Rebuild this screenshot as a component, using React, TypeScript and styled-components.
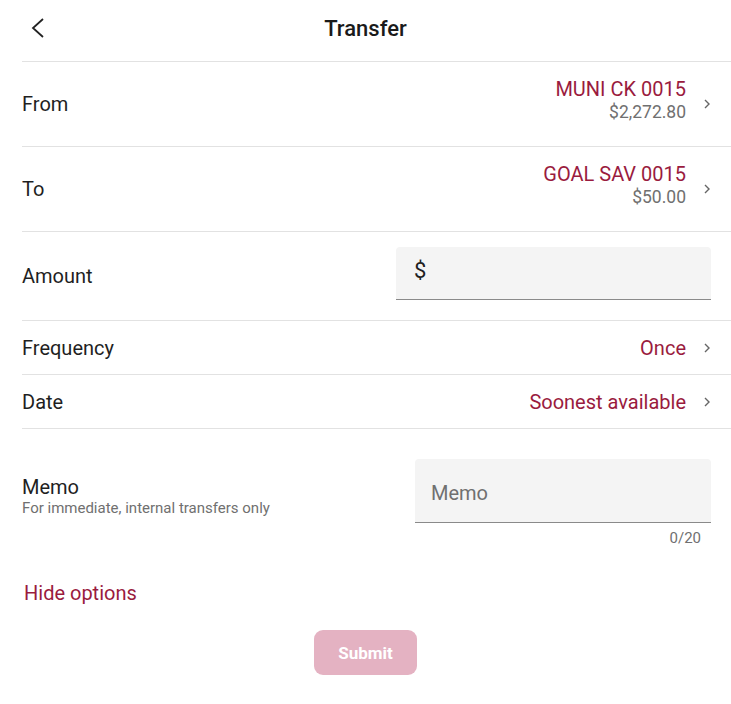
import React from "react";
import styled, { createGlobalStyle } from "styled-components";

const Global = createGlobalStyle`
  html, body { margin: 0; padding: 0; background: #fff; }
  body { font-family: Roboto, "Noto Sans", Arial, sans-serif; color: #1f1f1f; }
  * { box-sizing: border-box; }
`;

const CRIMSON = "#9a1b3e";
const GRAY = "#707070";

const Page = styled.div`
  width: 731px;
  display: flex;
  flex-direction: column;
`;

const Header = styled.header`
  height: 62px;
  margin-left: 22px;
  display: grid;
  grid-template-columns: 1fr auto 1fr;
  align-items: center;
  border-bottom: 1px solid #e2e2e2;
  padding-right: 22px;
`;

const BackBtn = styled.button`
  justify-self: start;
  background: none;
  border: 0;
  padding: 0;
  margin-left: 8px;
  margin-top: -6px;
  width: 20px;
  height: 24px;
  display: flex;
  align-items: center;
  cursor: pointer;
`;

const Title = styled.h1`
  margin: -4px 0 0;
  font-size: 22px;
  font-weight: 500;
  color: #1a1a1a;
`;

const Row = styled.div<{ $h: number }>`
  margin-left: 22px;
  height: ${(p) => p.$h}px;
  display: flex;
  align-items: center;
  justify-content: space-between;
  border-bottom: 1px solid #e2e2e2;
  padding-right: 20px;
`;

const Label = styled.div`
  font-size: 20px;
  color: #1f1f1f;
`;

const ValueWrap = styled.div`
  display: flex;
  align-items: center;
  gap: 17px;
`;

const ValueCol = styled.div`
  display: flex;
  flex-direction: column;
  align-items: flex-end;
  line-height: 23px;
  margin-top: -6px;
`;

const Primary = styled.span`
  font-size: 20px;
  color: ${CRIMSON};
`;

const Secondary = styled.span`
  font-size: 17.5px;
  color: ${GRAY};
`;

const Field = styled.div<{ $w: number; $h: number; $lift?: number }>`
  width: ${(p) => p.$w}px;
  height: ${(p) => p.$h}px;
  margin-bottom: ${(p) => (p.$lift ?? 0) * 2}px;
  background: #f4f4f4;
  border-radius: 4px 4px 0 0;
  border-bottom: 1px solid #8a8a8a;
  display: flex;
  align-items: center;
  padding-left: 16px;
  font-size: 20px;
`;

const Dollar = styled.span`
  font-size: 22px;
  color: #1f1f1f;
  margin-left: 2px;
  margin-top: -4px;
`;

const Placeholder = styled.span`
  color: ${GRAY};
  margin-top: 5px;
`;

const MemoRow = styled.div`
  margin-left: 22px;
  padding-right: 20px;
  padding-top: 30px;
  display: flex;
  justify-content: space-between;
`;

const MemoLabel = styled.div`
  display: flex;
  flex-direction: column;
  margin-top: 17px;
`;

const MemoTitle = styled.span`
  font-size: 20px;
  line-height: 23px;
  color: #1f1f1f;
`;

const Hint = styled.span`
  font-size: 15px;
  line-height: 18px;
  color: ${GRAY};
`;

const MemoField = styled.div`
  display: flex;
  flex-direction: column;
  align-items: flex-end;
`;

const Counter = styled.span`
  font-size: 15px;
  color: ${GRAY};
  margin-top: 6px;
  padding-right: 10px;
`;

const HideLink = styled.button`
  align-self: flex-start;
  margin: 34px 0 0 24px;
  background: none;
  border: 0;
  padding: 0;
  font-family: inherit;
  font-size: 20px;
  color: ${CRIMSON};
  cursor: pointer;
`;

const SubmitBtn = styled.button`
  align-self: center;
  margin: 25px 0 0 0;
  width: 103px;
  height: 45px;
  border-radius: 9px;
  border: 0;
  background: #e4b2c2;
  color: #fff;
  font-family: inherit;
  font-weight: 700;
  font-size: 17px;
`;

const Chevron = () => (
  <svg width="8" height="12" viewBox="0 0 8 12">
    <polyline points="2,2 6,6 2,10" fill="none" stroke="#666" strokeWidth="1.4" />
  </svg>
);

export default function App() {
  return (
    <>
      <Global />
      <Page>
        <Header>
          <BackBtn aria-label="Back">
            <svg width="16" height="24" viewBox="0 0 16 24">
              <polyline points="13,3 3,12 13,21" fill="none" stroke="#222" strokeWidth="1.8" />
            </svg>
          </BackBtn>
          <Title>Transfer</Title>
          <span />
        </Header>
        <Row $h={85}>
          <Label>From</Label>
          <ValueWrap>
            <ValueCol>
              <Primary>MUNI CK 0015</Primary>
              <Secondary>$2,272.80</Secondary>
            </ValueCol>
            <Chevron />
          </ValueWrap>
        </Row>
        <Row $h={85}>
          <Label>To</Label>
          <ValueWrap>
            <ValueCol>
              <Primary>GOAL SAV 0015</Primary>
              <Secondary>$50.00</Secondary>
            </ValueCol>
            <Chevron />
          </ValueWrap>
        </Row>
        <Row $h={89}>
          <Label>Amount</Label>
          <Field $w={315} $h={53} $lift={3}>
            <Dollar>$</Dollar>
          </Field>
        </Row>
        <Row $h={54}>
          <Label>Frequency</Label>
          <ValueWrap>
            <Primary>Once</Primary>
            <Chevron />
          </ValueWrap>
        </Row>
        <Row $h={54}>
          <Label>Date</Label>
          <ValueWrap>
            <Primary>Soonest available</Primary>
            <Chevron />
          </ValueWrap>
        </Row>
        <MemoRow>
          <MemoLabel>
            <MemoTitle>Memo</MemoTitle>
            <Hint>For immediate, internal transfers only</Hint>
          </MemoLabel>
          <MemoField>
            <Field $w={296} $h={64}>
              <Placeholder>Memo</Placeholder>
            </Field>
            <Counter>0/20</Counter>
          </MemoField>
        </MemoRow>
        <HideLink>Hide options</HideLink>
        <SubmitBtn>Submit</SubmitBtn>
      </Page>
    </>
  );
}
